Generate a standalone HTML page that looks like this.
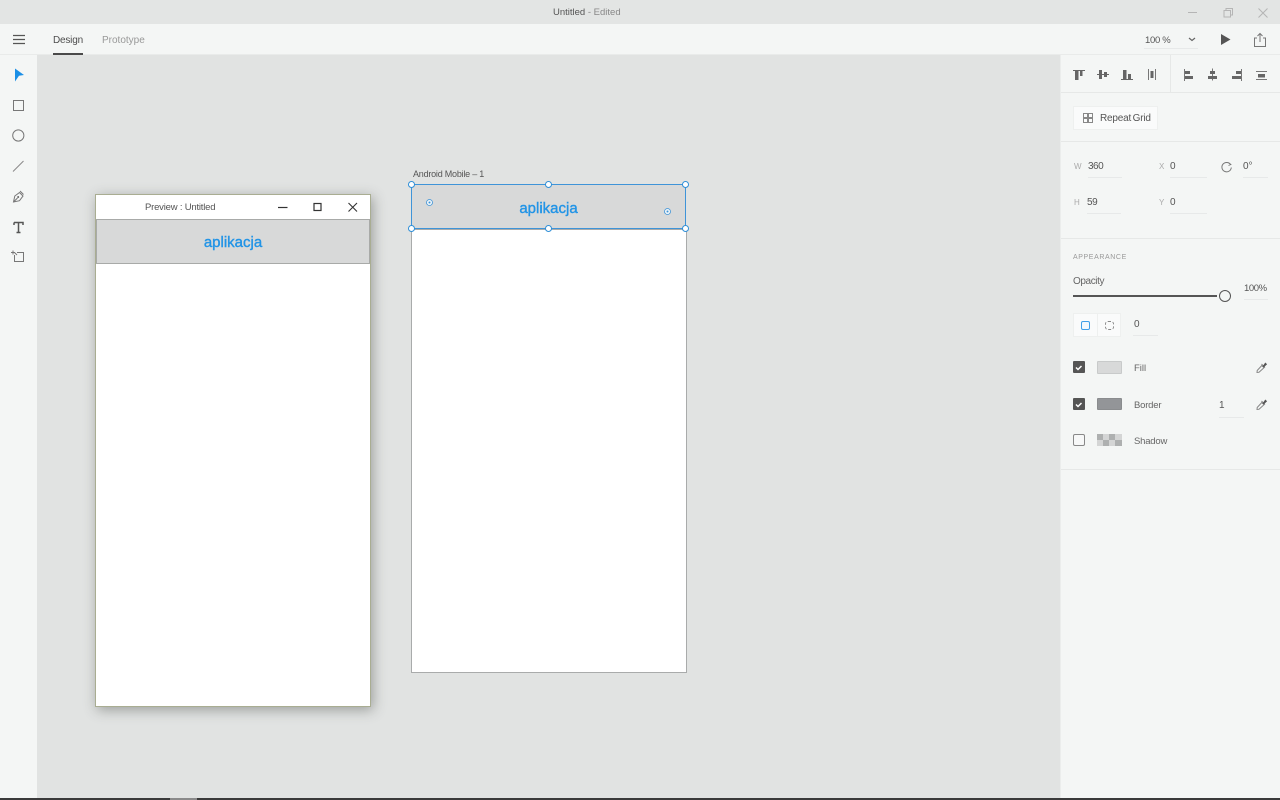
<!DOCTYPE html>
<html>
<head>
<meta charset="utf-8">
<style>
html,body{margin:0;padding:0;width:1280px;height:800px;overflow:hidden;background:#e1e3e2;font-family:"Liberation Sans",sans-serif;}
div,span{position:absolute;box-sizing:border-box;}
.t{white-space:nowrap;line-height:14px;color:#555;font-size:10px;}
.u{height:1px;background:#e7e9e9;}
.h{width:7px;height:7px;border-radius:50%;background:#fff;border:1px solid #2f8fd8;}
svg{position:absolute;left:0;top:0;}
</style>
</head>
<body>
<!-- title bar -->
<div style="left:0;top:0;width:1280px;height:24px;background:#e3e5e4;"></div>
<div class="t" style="left:553px;top:6px;font-size:9.5px;color:#555;">Untitled <span style="position:static;color:#888;">- Edited</span></div>
<!-- toolbar -->
<div style="left:0;top:24px;width:1280px;height:31px;background:#f4f6f5;border-bottom:1px solid #e9ebea;"></div>
<div class="t" style="left:53px;top:34px;font-size:10px;letter-spacing:-.2px;color:#4d4d4d;">Design</div>
<div class="t" style="left:102px;top:34px;font-size:10px;color:#999;">Prototype</div>
<div style="left:53px;top:53px;width:30px;height:2px;background:#4a4a4a;"></div>
<div class="t" style="left:1145px;top:34px;font-size:9.5px;letter-spacing:-.3px;color:#555;">100 %</div>
<div class="u" style="left:1144px;top:48px;width:54px;"></div>
<!-- left bar -->
<div style="left:0;top:55px;width:37px;height:745px;background:#f4f6f5;"></div>
<!-- right panel -->
<div style="left:1060px;top:55px;width:220px;height:745px;background:#f4f6f5;border-left:1px solid #ebedec;"></div>
<div style="left:1061px;top:92px;width:219px;height:1px;background:#e6e8e7;"></div>
<div style="left:1170px;top:55px;width:1px;height:37px;background:#e6e8e7;"></div>
<div style="left:1061px;top:141px;width:219px;height:1px;background:#e6e8e7;"></div>
<div style="left:1061px;top:238px;width:219px;height:1px;background:#e6e8e7;"></div>
<div style="left:1061px;top:469px;width:219px;height:1px;background:#e6e8e7;"></div>

<div style="left:1073px;top:106px;width:85px;height:24px;background:#fafbfb;border:1px solid #eef0ef;"></div>
<div class="t" style="left:1100px;top:112px;font-size:10px;letter-spacing:-.2px;word-spacing:-1px;color:#555;">Repeat Grid</div>

<div class="t" style="left:1074px;top:160px;font-size:8px;color:#aaa;">W</div>
<div class="t" style="left:1088px;top:160px;letter-spacing:-.5px;color:#555;">360</div>
<div class="u" style="left:1088px;top:177px;width:34px;"></div>
<div class="t" style="left:1159px;top:160px;font-size:8px;color:#aaa;">X</div>
<div class="t" style="left:1170px;top:160px;color:#555;">0</div>
<div class="u" style="left:1170px;top:177px;width:37px;"></div>
<div class="t" style="left:1243px;top:160px;color:#555;">0°</div>
<div class="u" style="left:1243px;top:177px;width:25px;"></div>
<div class="t" style="left:1074px;top:196px;font-size:8px;color:#aaa;">H</div>
<div class="t" style="left:1087px;top:196px;letter-spacing:-.4px;color:#555;">59</div>
<div class="u" style="left:1087px;top:213px;width:34px;"></div>
<div class="t" style="left:1159px;top:196px;font-size:8px;color:#aaa;">Y</div>
<div class="t" style="left:1170px;top:196px;color:#555;">0</div>
<div class="u" style="left:1170px;top:213px;width:37px;"></div>

<div class="t" style="left:1073px;top:251px;font-size:7px;letter-spacing:.6px;color:#999;">APPEARANCE</div>
<div class="t" style="left:1073px;top:275px;font-size:10px;letter-spacing:-.4px;color:#666;">Opacity</div>
<div style="left:1073px;top:295px;width:144px;height:2px;background:#555;"></div>
<div style="left:1219px;top:290px;width:12px;height:12px;border-radius:50%;background:#f4f6f5;border:1.5px solid #555;"></div>
<div class="t" style="left:1244px;top:282px;font-size:9.5px;letter-spacing:-.4px;color:#555;">100%</div>
<div class="u" style="left:1244px;top:299px;width:24px;"></div>

<div style="left:1073px;top:313px;width:48px;height:24px;background:#fafbfb;border:1px solid #eef0ef;"></div>
<div style="left:1097px;top:313px;width:1px;height:24px;background:#eef0ef;"></div>
<div style="left:1081px;top:321px;width:9px;height:9px;border:1px solid #3f9fe8;border-radius:2px;background:#f2f8fd;"></div>
<div style="left:1105px;top:321px;width:9px;height:9px;border:1px dashed #888;border-radius:3px;"></div>
<div class="t" style="left:1134px;top:318px;color:#555;">0</div>
<div class="u" style="left:1133px;top:335px;width:25px;"></div>

<div style="left:1073px;top:361px;width:12px;height:12px;background:#555;border-radius:1px;"></div>
<div style="left:1097px;top:361px;width:25px;height:13px;background:#d8d9d9;border:1px solid #c8caca;border-radius:1px;"></div>
<div class="t" style="left:1134px;top:362px;font-size:9.5px;color:#666;">Fill</div>

<div style="left:1073px;top:398px;width:12px;height:12px;background:#555;border-radius:1px;"></div>
<div style="left:1097px;top:398px;width:25px;height:12px;background:#939598;border:1px solid #8a8c8e;border-radius:1px;"></div>
<div class="t" style="left:1134px;top:399px;font-size:9.5px;letter-spacing:-.2px;color:#666;">Border</div>
<div class="t" style="left:1219px;top:399px;color:#555;">1</div>
<div class="u" style="left:1219px;top:417px;width:25px;"></div>

<div style="left:1073px;top:434px;width:12px;height:12px;background:#f7f8f8;border:1px solid #888;border-radius:2px;"></div>
<div style="left:1097px;top:434px;width:25px;height:12px;background:#d4d5d5;"></div>
<div style="left:1097px;top:434px;width:6px;height:6px;background:#aeb0b0;"></div>
<div style="left:1109px;top:434px;width:6px;height:6px;background:#aeb0b0;"></div>
<div style="left:1103px;top:440px;width:6px;height:6px;background:#aeb0b0;"></div>
<div style="left:1115px;top:440px;width:7px;height:6px;background:#aeb0b0;"></div>
<div class="t" style="left:1134px;top:435px;font-size:9.5px;letter-spacing:-.2px;color:#666;">Shadow</div>

<!-- preview window -->
<div style="left:95px;top:194px;width:276px;height:513px;background:#fff;border:1px solid #a9ad92;box-shadow:2px 3px 12px rgba(70,75,70,.45);"></div>
<div style="left:96px;top:219px;width:274px;height:45px;background:#d8d9d9;border:1px solid #a8aaa8;"></div>
<div class="t" style="left:145px;top:201px;font-size:9.5px;letter-spacing:-.2px;color:#555;">Preview : Untitled</div>
<div class="t" style="left:96px;width:274px;top:234px;line-height:18px;text-align:center;font-size:15px;color:#2294e6;-webkit-text-stroke:.4px #2294e6;">aplikacja</div>

<!-- artboard -->
<div class="t" style="left:413px;top:167px;font-size:9px;letter-spacing:-.22px;color:#555;">Android Mobile – 1</div>
<div style="left:411px;top:229px;width:276px;height:444px;background:#fff;border:1px solid #a9abab;"></div>
<div style="left:411px;top:184px;width:275px;height:45px;background:#d8d9d9;border:1px solid #3f94d8;"></div>
<div class="t" style="left:411px;width:275px;top:200px;line-height:18px;text-align:center;font-size:15px;color:#2294e6;-webkit-text-stroke:.4px #2294e6;">aplikacja</div>
<div class="h" style="left:408px;top:181px;"></div>
<div class="h" style="left:545px;top:181px;"></div>
<div class="h" style="left:682px;top:181px;"></div>
<div class="h" style="left:408px;top:225px;"></div>
<div class="h" style="left:545px;top:225px;"></div>
<div class="h" style="left:682px;top:225px;"></div>

<!-- bottom edge -->
<div style="left:0;top:798px;width:1280px;height:2px;background:#3a3a3a;"></div>
<div style="left:170px;top:798px;width:27px;height:2px;background:#8a8a8a;"></div>

<svg width="1280" height="800" viewBox="0 0 1280 800" fill="none">
  <!-- hamburger -->
  <path d="M13 35.500h12M13 39.500h12M13 43.500h12" stroke="#555" stroke-width="1.300"/>
  <!-- tools -->
  <path d="M15 68.500l9 6.500-5 .8-4 5.700z" fill="#1b8fe6"/>
  <rect x="13.500" y="100.500" width="10" height="10" stroke="#777"/>
  <circle cx="18.300" cy="135.500" r="5.600" stroke="#777"/>
  <path d="M13 171.500L23.500 161" stroke="#888"/>
  <path d="M13.500 202l1.300-6 4.700-3.500 3.500 3.500-3.500 4.700zM14 201.500l3.500-3.500M20 191l3.500 3.500" stroke="#777"/>
  <circle cx="18.200" cy="197" r="1" fill="#666"/>
  <path d="M14 222.500h9v2.500M14 222.500v2.500M18.500 222.500v9.500M16.500 232.500h4" stroke="#555" stroke-width="1.500"/>
  <path d="M14.500 255v6.500h9v-9h-6.500M14.500 252.500L17 255M11 252.500h4M13 250.500v4" stroke="#777"/>
  <!-- window controls -->
  <path d="M1188 12.500h9" stroke="#b5b5b5"/>
  <path d="M1224 10.500h6.500v6.500h-6.500zM1226 10.500v-2h6.500v6.500h-2" stroke="#b5b5b5"/>
  <path d="M1258.500 8.500l9 9M1267.500 8.500l-9 9" stroke="#b5b5b5"/>
  <!-- zoom chevron, play, share -->
  <path d="M1189 38l3 2.500 3-2.500" stroke="#666" stroke-width="1.200"/>
  <path d="M1221 34l9.500 5.500-9.500 5.500z" fill="#555"/>
  <path d="M1257 38h-2.500v8.500h11V38H1263M1260 42V33.500M1257.500 36l2.500-2.500 2.500 2.500" stroke="#777"/>
  <!-- align icons -->
  <path d="M1073 70.500h12" stroke="#666"/>
  <path d="M1075 71h3.500v9H1075zM1080 71h2.500v5H1080z" fill="#666"/>
  <path d="M1097 74.500h12" stroke="#666"/>
  <path d="M1099 70h3v9h-3zM1104 72h3v5h-3z" fill="#666"/>
  <path d="M1121 79.500h12" stroke="#666"/>
  <path d="M1123 70h3.500v9H1123zM1128 74h3v5h-3z" fill="#666"/>
  <path d="M1148.500 69v11M1155.500 69v11" stroke="#777"/>
  <path d="M1150.500 71h3v7h-3z" fill="#666"/>
  <path d="M1184.500 69v12" stroke="#777"/>
  <path d="M1185 71h5v3h-5zM1185 76h8v3h-8z" fill="#666"/>
  <path d="M1212.500 68.500v12" stroke="#777"/>
  <path d="M1210 71h5v3h-5zM1208 76h9v3h-9z" fill="#666"/>
  <path d="M1241.500 69v12" stroke="#777"/>
  <path d="M1236 71h5v3h-5zM1232 76h9v3h-9z" fill="#666"/>
  <path d="M1256 71.500h11M1256 79.500h11" stroke="#777"/>
  <path d="M1258 74h7v3.500h-7z" fill="#666"/>
  <!-- repeat grid icon -->
  <path d="M1083.500 113.500h4v4h-4zM1088.500 113.500h4v4h-4zM1083.500 118.500h4v4h-4zM1088.500 118.500h4v4h-4z" stroke="#888"/>
  <!-- rotate icon -->
  <path d="M1230.500 164.500a4.700 4.700 0 1 0 .8 3" stroke="#777"/>
  <path d="M1228.500 162.500l2.500 2-2.500 1" stroke="#777" stroke-width=".8"/>
  <!-- checks -->
  <path d="M1076 367.500l2 2 3.500-3.500" stroke="#fff" stroke-width="1.500"/>
  <path d="M1076 404.500l2 2 3.500-3.500" stroke="#fff" stroke-width="1.500"/>
  <!-- eyedroppers -->
  <path d="M1257 372.500l.2-2 4.600-5 2.200 2.200-5 4.600zM1261.500 364l3.500 3.500" stroke="#888"/>
  <path d="M1262.500 366.500l2.800-4 1.800 1.800-3.500 3.200z" fill="#555"/>
  <path d="M1257 409.500l.2-2 4.600-5 2.200 2.200-5 4.600zM1261.500 401l3.500 3.500" stroke="#888"/>
  <path d="M1262.500 403.500l2.800-4 1.800 1.800-3.500 3.200z" fill="#555"/>
  <!-- preview controls -->
  <path d="M278 207.500h9.500" stroke="#333" stroke-width="1.200"/>
  <rect x="314" y="203.500" width="7" height="7" stroke="#333" stroke-width="1.200"/>
  <path d="M348.500 203l8.500 8.500M357 203l-8.500 8.500" stroke="#333" stroke-width="1.100"/>
  <!-- radius handles -->
  <circle cx="429.500" cy="202.500" r="3" fill="#eef4f8" stroke="#3f94d8" stroke-width=".8"/>
  <circle cx="429.500" cy="202.500" r="1" fill="#3f94d8"/>
  <circle cx="667.500" cy="211.500" r="3" fill="#eef4f8" stroke="#3f94d8" stroke-width=".8"/>
  <circle cx="667.500" cy="211.500" r="1" fill="#3f94d8"/>
</svg>
</body>
</html>
